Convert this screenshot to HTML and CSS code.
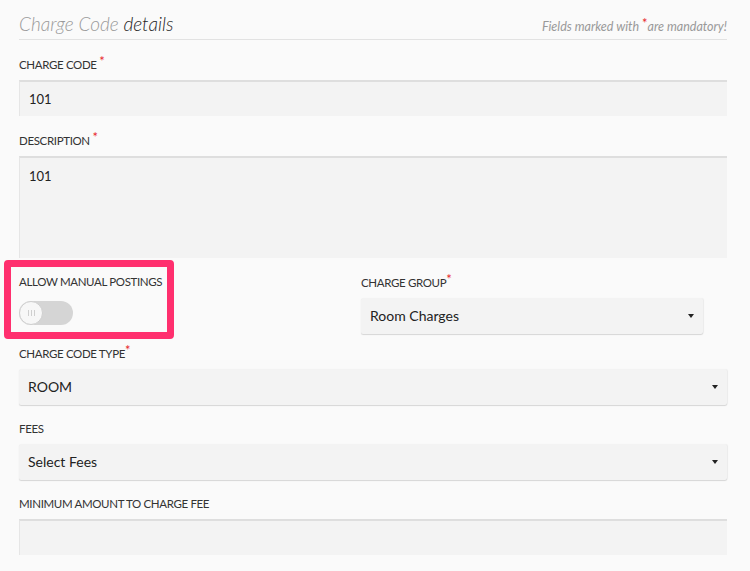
FILE: index.html
```html
<!DOCTYPE html>
<html>
<head>
<meta charset="utf-8">
<link rel="stylesheet" href="styles.css">
</head>
<body>
<div class="page">
  <div class="header">
    <h2 class="title"><span class="title-light">Charge Code</span> details</h2>
    <div class="mandatory">Fields marked with <span class="req">*</span>are mandatory!</div>
  </div>

  <div class="field field-first">
    <label class="label">CHARGE CODE <span class="req">*</span></label>
    <div class="input">101</div>
  </div>

  <div class="field">
    <label class="label">DESCRIPTION <span class="req">*</span></label>
    <div class="input textarea">101</div>
  </div>

  <div class="row">
    <div class="col col-left">
      <label class="label">ALLOW MANUAL POSTINGS</label>
      <div class="toggle"><div class="knob"><span class="grip"></span></div></div>
      <div class="highlight"></div>
    </div>
    <div class="col col-right">
      <label class="label">CHARGE GROUP<span class="req">*</span></label>
      <div class="select">Room Charges<span class="caret"></span></div>
    </div>
  </div>

  <div class="field">
    <label class="label">CHARGE CODE TYPE<span class="req">*</span></label>
    <div class="select">ROOM<span class="caret"></span></div>
  </div>

  <div class="field">
    <label class="label">FEES</label>
    <div class="select">Select Fees<span class="caret"></span></div>
  </div>

  <div class="field">
    <label class="label">MINIMUM AMOUNT TO CHARGE FEE</label>
    <div class="input"></div>
  </div>
</div>
</body>
</html>
```

FILE: styles.css
```css
html, body {
  margin: 0;
  padding: 0;
  background: #fafafa;
}
body {
  font-family: Lato, "Liberation Sans", sans-serif;
  color: #333;
}
.page {
  width: 708px;
  margin-left: 19px;
}
.header {
  display: flex;
  justify-content: space-between;
  align-items: baseline;
  padding-top: 12px;
  padding-bottom: 3px;
  border-bottom: 1px solid #e2e2e2;
  margin-bottom: 17px;
}
.title {
  margin: 0;
  font-size: 19px;
  line-height: 24px;
  font-weight: 300;
  font-style: italic;
  color: #1e1e1e;
}
.title-light {
  color: #9a9a9a;
  font-weight: 300;
}
.mandatory {
  font-size: 12.5px;
  font-style: italic;
  color: #999;
}
.req {
  color: #e8262b;
  font-style: normal;
  position: relative;
  top: -3px;
  font-size: 13px;
  line-height: 0;
}
.field {
  margin-bottom: 16px;
}
.field-first {
  margin-bottom: 17px;
}
.label {
  display: block;
  font-size: 11.5px;
  letter-spacing: -0.35px;
  line-height: 15px;
  margin-bottom: 8px;
  color: #333;
}
.input, .select {
  box-sizing: border-box;
  height: 36px;
  background: #f3f3f3;
  padding: 0 9px;
  font-size: 13px;
  line-height: 36px;
  color: #222;
}
.input {
  border-top: 2px solid #dedede;
  border-left: 1px solid #e6e6e6;
  line-height: 34px;
}
.textarea {
  height: 102px;
  line-height: 20px;
  padding-top: 8px;
}
.select {
  position: relative;
  font-size: 14px;
  box-shadow: 0 1px 1px rgba(0,0,0,0.14), 1px 0 1px rgba(0,0,0,0.05);
  border-radius: 2px;
}
.caret {
  position: absolute;
  right: 9px;
  top: 16px;
  width: 0;
  height: 0;
  border-left: 3px solid transparent;
  border-right: 3px solid transparent;
  border-top: 4px solid #222;
}
.row {
  display: grid;
  grid-template-columns: 342px 342px;
  align-items: start;
  margin-bottom: 12px;
}
.col-left {
  position: relative;
}
.col-right {
  padding-top: 1px;
}
.col-left .label {
  margin-bottom: 12px;
}
.toggle {
  width: 54px;
  height: 24px;
  border-radius: 12px;
  background: #d5d5d5;
  position: relative;
}
.knob {
  position: absolute;
  left: 0;
  top: 0;
  width: 22px;
  height: 22px;
  border-radius: 50%;
  background: #f7f7f7;
  border: 1px solid #cfcfcf;
  display: flex;
  align-items: center;
  justify-content: center;
}
.grip {
  width: 5px;
  height: 6px;
  border-left: 1px solid #cfcfcf;
  border-right: 1px solid #cfcfcf;
  position: relative;
}
.grip::after {
  content: "";
  position: absolute;
  left: 2px;
  top: 0;
  width: 1px;
  height: 6px;
  background: #cfcfcf;
}
.highlight {
  position: absolute;
  left: -15px;
  top: -14px;
  width: 156px;
  height: 65px;
  border: 7px solid #ff2f6e;
  border-radius: 4px;
}
```
